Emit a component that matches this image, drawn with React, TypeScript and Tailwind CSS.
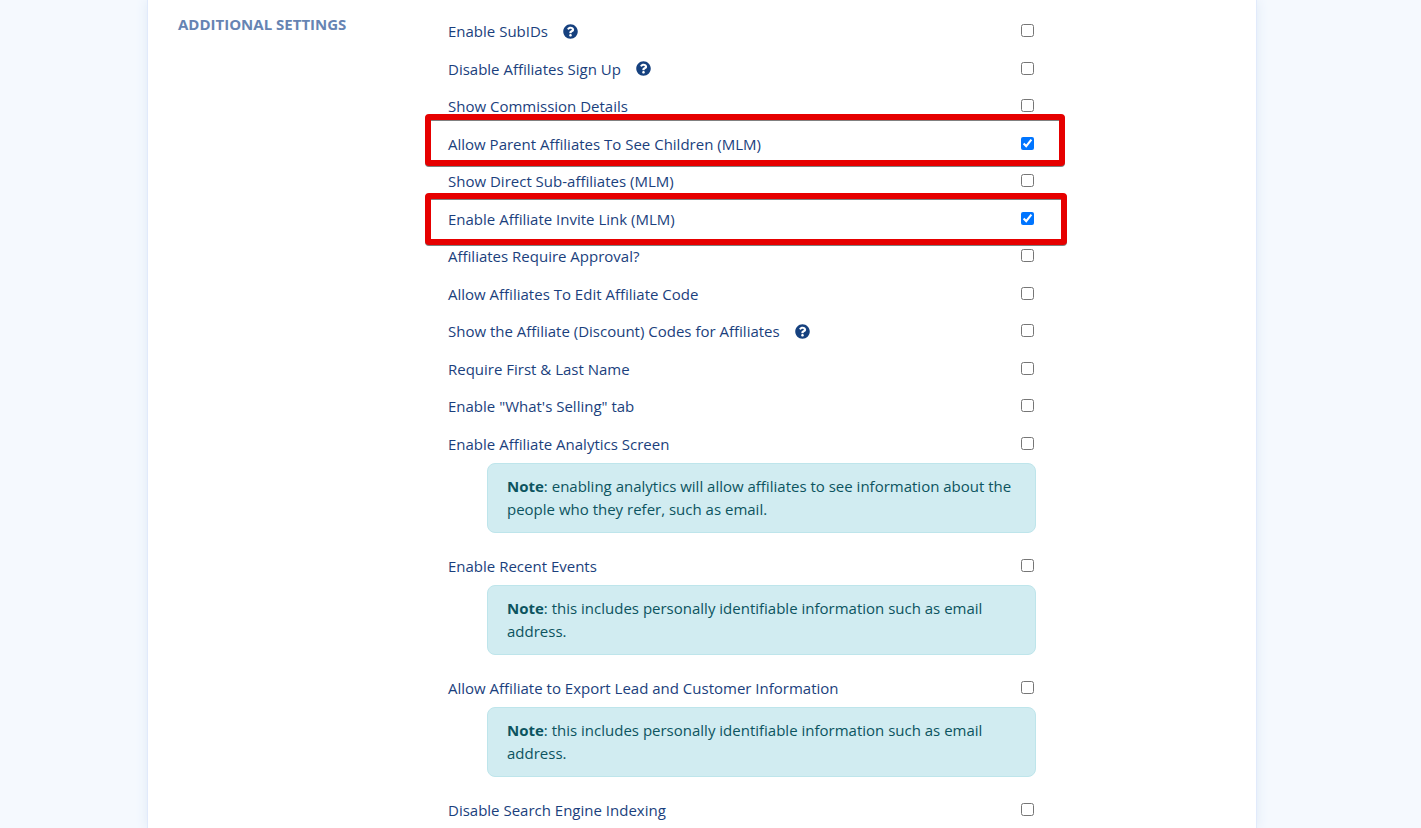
import React, { useState } from 'react';
import { FaQuestionCircle } from 'react-icons/fa';

interface Setting {
  id: string;
  label: string;
  help?: string;
  note?: string;
  checked?: boolean;
  frame?: string;
}

const PII_NOTE = 'this includes personally identifiable information such as email address.';

const SETTINGS: Setting[] = [
  { id: 'sub-ids', label: 'Enable SubIDs', help: 'Enable SubIDs help' },
  { id: 'disable-sign-up', label: 'Disable Affiliates Sign Up', help: 'Disable Affiliates Sign Up help' },
  { id: 'commission-details', label: 'Show Commission Details' },
  { id: 'see-children', label: 'Allow Parent Affiliates To See Children (MLM)', checked: true, frame: '-top-3 -right-[29px]' },
  { id: 'sub-affiliates', label: 'Show Direct Sub-affiliates (MLM)' },
  { id: 'invite-link', label: 'Enable Affiliate Invite Link (MLM)', checked: true, frame: '-top-2 -right-[31px]' },
  { id: 'require-approval', label: 'Affiliates Require Approval?' },
  { id: 'edit-code', label: 'Allow Affiliates To Edit Affiliate Code' },
  { id: 'discount-codes', label: 'Show the Affiliate (Discount) Codes for Affiliates', help: 'Discount codes help' },
  { id: 'require-name', label: 'Require First & Last Name' },
  { id: 'whats-selling', label: 'Enable "What\'s Selling" tab' },
  {
    id: 'analytics',
    label: 'Enable Affiliate Analytics Screen',
    note: 'enabling analytics will allow affiliates to see information about the people who they refer, such as email.',
  },
  { id: 'recent-events', label: 'Enable Recent Events', note: PII_NOTE },
  { id: 'export-leads', label: 'Allow Affiliate to Export Lead and Customer Information', note: PII_NOTE },
  { id: 'disable-indexing', label: 'Disable Search Engine Indexing' },
];

interface SettingRowProps {
  setting: Setting;
  checked: boolean;
  onToggle: (id: string) => void;
}

const SettingRow = ({ setting, checked, onToggle }: SettingRowProps) => {
  const { id, label, help, note, frame } = setting;

  return (
    <div>
      <div className={`relative flex items-center pt-[7px] ${note ? 'pb-[7px] leading-[23px]' : 'pb-2 leading-normal'}`}>
        <label htmlFor={id}>{label}</label>
        {help && (
          <button type="button" aria-label={help} className="ml-[15px] text-[#16417f]">
            <FaQuestionCircle className="size-[15px]" />
          </button>
        )}
        <input
          id={id}
          type="checkbox"
          checked={checked}
          onChange={() => onToggle(id)}
          className="mr-0.5 mb-px ml-auto size-[13px]"
        />
        {frame && (
          <div
            className={`pointer-events-none absolute -left-[23px] h-[52px] rounded-sm border-6 border-[#e60000] drop-shadow-[0_1px_0_#808080] ${frame}`}
          />
        )}
      </div>
      {note && (
        <div className="mb-[15px] ml-[39px] rounded-lg border border-[#bee5eb] bg-[#d1ecf1] px-[19px] py-[11px] leading-[23px] text-[#0c5460]">
          <strong className="font-bold">Note</strong>: {note}
        </div>
      )}
    </div>
  );
};

const App = () => {
  const [enabled, setEnabled] = useState<string[]>(SETTINGS.filter((s) => s.checked).map((s) => s.id));

  const toggle = (id: string) => {
    setEnabled((prev) => (prev.includes(id) ? prev.filter((x) => x !== id) : [...prev, id]));
  };

  return (
    <div className="h-screen overflow-hidden bg-[#f5f9fe] pr-[17px] font-['Open_Sans',sans-serif] text-[15px] text-[#1b3f7d]">
      <main className="mx-auto flex min-h-full max-w-[1108px] bg-white px-[30px] pt-[13px] shadow-[0_0_0_1px_#e1eafb,0_0_12px_#dbe7f5]">
        <h2 className="w-[270px] shrink-0 font-bold text-[#6684b3] uppercase">Additional Settings</h2>
        <form className="max-w-[588px] flex-1">
          {SETTINGS.map((s) => (
            <SettingRow key={s.id} setting={s} checked={enabled.includes(s.id)} onToggle={toggle} />
          ))}
        </form>
      </main>
    </div>
  );
};

export default App;
